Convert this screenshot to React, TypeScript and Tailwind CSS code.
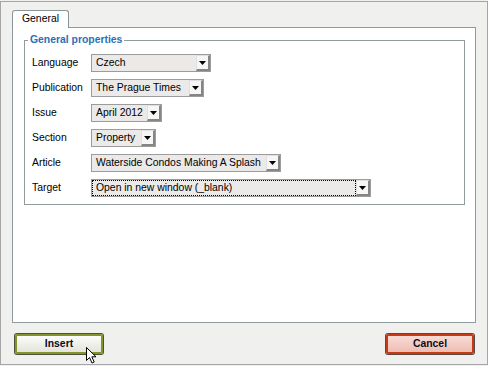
import React from 'react';

type Row = { label: string; value: string; width: string; focused?: boolean };

const ROWS: Row[] = [
  { label: 'Language', value: 'Czech', width: 'w-[120px]' },
  { label: 'Publication', value: 'The Prague Times', width: 'w-[113px]' },
  { label: 'Issue', value: 'April 2012', width: 'w-[71px]' },
  { label: 'Section', value: 'Property', width: 'w-[65px]' },
  { label: 'Article', value: 'Waterside Condos Making A Splash', width: 'w-[190px]' },
  { label: 'Target', value: 'Open in new window (_blank)', width: 'w-[280px]', focused: true },
];

const Select: React.FC<{ row: Row }> = ({ row }) => (
  <div className={`${row.width} h-[18px] flex border border-[#9c9c9c] bg-[#ebeae8]`}>
    <div
      className={
        row.focused
          ? 'flex-1 min-w-0 flex items-center pl-[3px] border border-dotted border-black whitespace-nowrap overflow-hidden'
          : 'flex-1 min-w-0 flex items-center pl-[4px] whitespace-nowrap overflow-hidden'
      }
    >
      {row.value}
    </div>
    <div className="w-[14px] flex items-center justify-center bg-[#f6f6f4] border-l border-t border-[#e0e0e0] border-r-2 border-b-2 border-r-[#858585] border-b-[#858585]">
      <svg width="7" height="4" viewBox="0 0 7 4">
        <path d="M0 0 H7 L3.5 4 Z" fill="#000" />
      </svg>
    </div>
  </div>
);

const App: React.FC = () => {
  return (
    <div className="w-[488px] h-[366px] bg-[#f0f0ee] pt-px relative font-['Liberation_Sans',Arial,sans-serif] text-[10.4px] text-black">
      <div className="h-[364px] border border-[#a6a6a6] flex flex-col">
        {/* tabs */}
        <div className="flex pl-[11px] pt-[8px]">
          <div className="relative z-10 -mb-px w-[57px] h-[18px] bg-white border border-b-0 border-[#8a9597] rounded-t-[3px] pl-[9px] pt-[2px] leading-[12px]">
            General
          </div>
        </div>

        {/* panel */}
        <div className="mx-[11px] h-[296px] bg-white border border-[#919b9c] pt-[6px] pl-[11px] pr-[10px]">
          <fieldset className="border border-[#919b9c] pl-[3px] pt-[8px] pb-[7px]">
            <legend className="px-[2px] leading-[12px] font-bold text-[#2b6fb6]">General properties</legend>
            <div className="flex flex-col gap-[7px] pl-[4px]">
              {ROWS.map(row => (
                <div key={row.label} className="flex items-center">
                  <div className="w-[59px]">{row.label}</div>
                  <Select row={row} />
                </div>
              ))}
            </div>
          </fieldset>
        </div>

        {/* buttons */}
        <div className="flex justify-between pl-[14px] pr-[13px] pt-[11px]">
          <button className="w-[88px] h-[20px] rounded-[2px] border-2 border-[#84932a] shadow-[0_0_0_1px_#4e5040] bg-linear-to-b from-[#fcfcfa] to-[#e4e4dc] font-bold text-[#0c0c20] leading-none">
            Insert
          </button>
          <button className="w-[88px] h-[20px] rounded-[2px] border-2 border-[#c73a14] shadow-[0_0_0_1px_#5a4a44] bg-linear-to-b from-[#f9dcd5] to-[#edbdb3] font-bold text-[#0c0c20] leading-none">
            Cancel
          </button>
        </div>
      </div>

      {/* mouse pointer */}
      <svg className="absolute left-[86px] top-[347px]" width="12" height="17" viewBox="0 0 12 17">
        <path d="M0.5 0.5 L0.5 13.5 L3.5 10.5 L6 16 L8.2 15 L5.8 9.8 L10 9.8 Z" fill="#fff" stroke="#000" strokeWidth="1" strokeLinejoin="miter" />
      </svg>
    </div>
  );
};

export default App;
